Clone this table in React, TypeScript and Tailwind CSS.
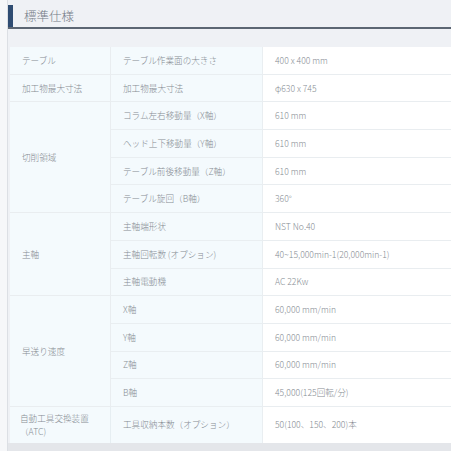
const font = { fontFamily: '"Noto Sans CJK JP", "Noto Sans", sans-serif' };

type Row = { group?: string; span?: number; label: string; value: string };

const rows: Row[] = [
  { group: "テーブル", span: 1, label: "テーブル作業面の大きさ", value: "400 x 400 mm" },
  { group: "加工物最大寸法", span: 1, label: "加工物最大寸法", value: "φ630 x 745" },
  { group: "切削領域", span: 4, label: "コラム左右移動量（X軸）", value: "610 mm" },
  { label: "ヘッド上下移動量（Y軸）", value: "610 mm" },
  { label: "テーブル前後移動量（Z軸）", value: "610 mm" },
  { label: "テーブル旋回（B軸）", value: "360°" },
  { group: "主軸", span: 3, label: "主軸端形状", value: "NST No.40" },
  { label: "主軸回転数 (オプション)", value: "40~15,000min-1(20,000min-1)" },
  { label: "主軸電動機", value: "AC 22Kw" },
  { group: "早送り速度", span: 4, label: "X軸", value: "60,000 mm/min" },
  { label: "Y軸", value: "60,000 mm/min" },
  { label: "Z軸", value: "60,000 mm/min" },
  { label: "B軸", value: "45,000(125回転/分)" },
];

const spanClass: Record<number, string> = {
  1: "row-span-1",
  3: "row-span-3",
  4: "row-span-4",
};

export default function App() {
  return (
    <div className="w-[451px] h-[451px] overflow-hidden bg-[#f6f7f9] pl-[7px]" style={font}>
      <div className="h-full border-l border-[#dcdfe4] bg-[#eff1f5] flex flex-col">
        <div className="mt-[5px] flex h-[24px] border-b-2 border-[#5c6673]">
          <div className="w-[5px] bg-[#2f4c72]" />
          <div className="pl-[11px] text-[12.5px] font-light leading-[22px] text-[#737b86]">標準仕様</div>
        </div>
        <div className="h-[18px]" />
        <div className="ml-[2px] grid grid-cols-[101px_152px_1fr] grid-rows-[repeat(13,27.7px)_36px] text-[8.6px] font-light text-[#858b92]">
          {rows.map((r, i) => (
            <SpecRow key={i} r={r} />
          ))}
          <div className="flex flex-col justify-center pl-[10px] bg-[#f4fafd] border-r border-[#e6eef2] leading-[13px]">
            <span>自動工具交換装置</span>
            <span>（ATC)</span>
          </div>
          <div className="flex items-center pl-[12px] bg-[#f4fafd] border-r border-[#e9eef1]">
            工具収納本数（オプション）
          </div>
          <div className="flex items-center pl-[12px] bg-white">50(100、150、200)本</div>
        </div>
        <div className="flex-1 bg-[#e4e6ea]" />
      </div>
    </div>
  );
}

function SpecRow({ r }: { r: Row }) {
  const line = "border-b border-[#e9edf0]";
  return (
    <>
      {r.group && (
        <div
          className={`${spanClass[r.span ?? 1]} flex items-center pl-[12px] bg-[#f4fafd] border-r border-[#e6eef2] ${line}`}
        >
          {r.group}
        </div>
      )}
      <div className={`flex items-center pl-[12px] bg-[#f4fafd] border-r border-[#e9eef1] ${line}`}>{r.label}</div>
      <div className={`flex items-center pl-[12px] bg-white ${line}`}>{r.value}</div>
    </>
  );
}
